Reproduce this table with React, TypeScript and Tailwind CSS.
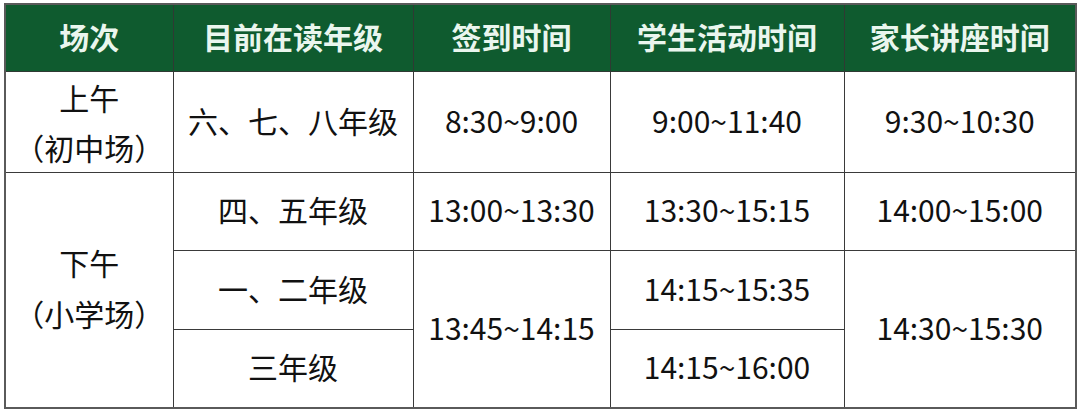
import React from "react";

const font = { fontFamily: '"Noto Sans CJK SC", "Noto Sans", sans-serif' };

export default function App() {
  const th =
    "bg-[#0f5b2f] text-[#eaf6ee] font-bold text-[30px] leading-[44px] text-center align-middle border border-[#2f3a33] p-0 pb-[4px]";
  const base =
    "text-[#111111] text-[30px] text-center align-middle border border-[#3a3a3a] p-0";
  const td = `${base} pb-[4px] leading-[48px]`;
  return (
    <div className="w-[1080px] h-[413px] bg-white pl-[4px] pt-[3px]" style={font}>
      <table className="border-collapse border-2 border-[#5a5a5a] table-fixed w-[1071px]">
        <colgroup>
          <col className="w-[168px]" />
          <col className="w-[240px]" />
          <col className="w-[197px]" />
          <col className="w-[234px]" />
          <col className="w-[232px]" />
        </colgroup>
        <thead>
          <tr className="h-[67px]">
            <th className={th}>场次</th>
            <th className={th}>目前在读年级</th>
            <th className={th}>签到时间</th>
            <th className={th}>学生活动时间</th>
            <th className={th}>家长讲座时间</th>
          </tr>
        </thead>
        <tbody>
          <tr className="h-[101px]">
            <td className={`${base} leading-[50px]`}>
              <div>上午</div>
              <div>（初中场）</div>
            </td>
            <td className={td}>六、七、八年级</td>
            <td className={td}>8:30~9:00</td>
            <td className={td}>9:00~11:40</td>
            <td className={td}>9:30~10:30</td>
          </tr>
          <tr className="h-[78px]">
            <td className={`${base} pb-[4px] leading-[51px]`} rowSpan={3}>
              <div>下午</div>
              <div>（小学场）</div>
            </td>
            <td className={td}>四、五年级</td>
            <td className={td}>13:00~13:30</td>
            <td className={td}>13:30~15:15</td>
            <td className={td}>14:00~15:00</td>
          </tr>
          <tr className="h-[79px]">
            <td className={td}>一、二年级</td>
            <td className={td} rowSpan={2}>13:45~14:15</td>
            <td className={td}>14:15~15:35</td>
            <td className={td} rowSpan={2}>14:30~15:30</td>
          </tr>
          <tr className="h-[79px]">
            <td className={td}>三年级</td>
            <td className={td}>14:15~16:00</td>
          </tr>
        </tbody>
      </table>
    </div>
  );
}
